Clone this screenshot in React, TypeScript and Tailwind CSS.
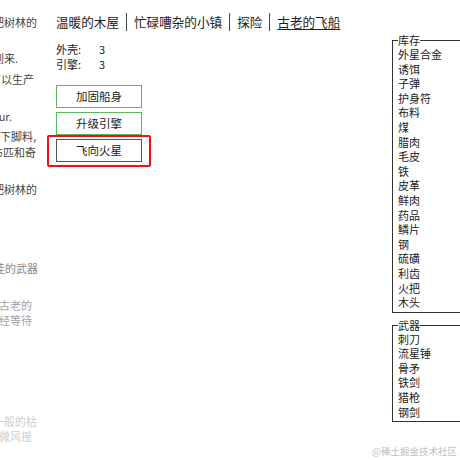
import React from 'react';

const logLines = [
  { text: '一片枇杷树林的', mt: 'mt-[15px]', pr: 'pr-[3px]', color: 'text-[#444]' },
  { text: '陌生人到来.', mt: 'mt-[21px]', pr: 'pr-[22px]', color: 'text-[#444]' },
  { text: '工坊可以生产', mt: 'mt-[6px]', pr: 'pr-[6px]', color: 'text-[#444]' },
  { text: 'the floor.ur.', mt: 'mt-[22px]', pr: 'pr-[28px]', color: 'text-[#444]' },
  { text: '还有一些下脚料,', mt: 'mt-[5px]', pr: 'pr-[4px]', color: 'text-[#444]' },
  { text: '几块布匹和奇', mt: 'mt-[1px]', pr: 'pr-[4px]', color: 'text-[#444]' },
  { text: '一片枇杷树林的', mt: 'mt-[22px]', pr: 'pr-[3px]', color: 'text-[#444]' },
  { text: '打造更佳的武器', mt: 'mt-[64px]', pr: 'pr-[2px]', color: 'text-[#888]' },
  { text: '那艘古老的', mt: 'mt-[22px]', pr: 'pr-[8px]', color: 'text-[#a3a3a3]' },
  { text: '它已经等待', mt: 'mt-0', pr: 'pr-[8px]', color: 'text-[#a3a3a3]' },
  { text: '骨头一般的枯', mt: 'mt-[86px]', pr: 'pr-[3px]', color: 'text-[#cdcdcd]' },
  { text: '枝在微风摇', mt: 'mt-0', pr: 'pr-[8px]', color: 'text-[#cdcdcd]' },
];

const tabs = ['温暖的木屋', '忙碌嘈杂的小镇', '探险', '古老的飞船'];

const stores = [
  '外星合金', '诱饵', '子弹', '护身符', '布料', '煤', '腊肉', '毛皮', '铁',
  '皮革', '鲜肉', '药品', '鳞片', '钢', '硫磺', '利齿', '火把', '木头',
];

const weapons = ['刺刀', '流星锤', '骨矛', '铁剑', '猎枪', '钢剑'];

function Panel({ title, items, className }: { title: string; items: string[]; className?: string }) {
  return (
    <fieldset className={`w-[100px] border border-[#333] pl-[5px] pb-[2px] ${className ?? ''}`}>
      <legend className="text-[11px] leading-[13px] text-[#222]">{title}</legend>
      {items.map((item) => (
        <div key={item} className="text-[11px] leading-[14.6px] text-[#222]">
          {item}
        </div>
      ))}
    </fieldset>
  );
}

export default function App() {
  return (
    <div className="relative flex w-[460px] h-[460px] overflow-hidden bg-white font-['Noto_Sans_CJK_SC',sans-serif]">
      {/* Event log, cut off on the left */}
      <div className="w-[40px] shrink-0 overflow-hidden">
        {logLines.map((line, i) => (
          <div key={i} className={`flex justify-end ${line.mt} ${line.pr}`}>
            <span className={`shrink-0 whitespace-nowrap text-[11px] leading-[15px] ${line.color}`}>
              {line.text}
            </span>
          </div>
        ))}
      </div>

      {/* Main */}
      <div className="ml-[16px] flex-1 pt-[13px]">
        <div className="flex text-[12.6px] leading-[18px] text-[#222]">
          {tabs.map((tab, i) => (
            <div
              key={tab}
              className={`${i > 0 ? 'border-l border-[#444] pl-[7px]' : ''} ${i < tabs.length - 1 ? 'pr-[7px]' : ''}`}
            >
              <span className={i === tabs.length - 1 ? 'underline underline-offset-2' : ''}>{tab}</span>
            </div>
          ))}
        </div>

        <div className="mt-[11px] text-[11px] leading-[15px] text-[#222]">
          <div className="flex">
            <span className="w-[43px]">外壳:</span>
            <span>3</span>
          </div>
          <div className="flex">
            <span className="w-[43px]">引擎:</span>
            <span>3</span>
          </div>
        </div>

        <div className="mt-[13px] flex flex-col gap-[4px]">
          <button className="flex h-[23px] w-[86px] items-center justify-center border border-[#5cb85c] bg-white text-[11.5px] text-[#222]">
            加固船身
          </button>
          <button className="flex h-[23px] w-[86px] items-center justify-center border border-[#5cb85c] bg-white text-[11.5px] text-[#222]">
            升级引擎
          </button>
          <div className="relative w-[86px]">
            <button className="flex h-[23px] w-[86px] items-center justify-center border border-[#555] bg-white text-[11.5px] text-[#222]">
              飞向火星
            </button>
            <div className="pointer-events-none absolute -left-[9px] -right-[9px] -top-[4px] -bottom-[5px] rounded-[2px] border-2 border-[#ee1111]" />
          </div>
        </div>
      </div>

      {/* Stores */}
      <div className="w-[68px] shrink-0 pt-[34px]">
        <Panel title="库存" items={stores} />
        <Panel title="武器" items={weapons} className="mt-[6px]" />
      </div>

      <div className="absolute bottom-[2px] right-[3px] text-[9.5px] leading-[14px] text-[#bdbdbd]">
        @稀土掘金技术社区
      </div>
    </div>
  );
}
